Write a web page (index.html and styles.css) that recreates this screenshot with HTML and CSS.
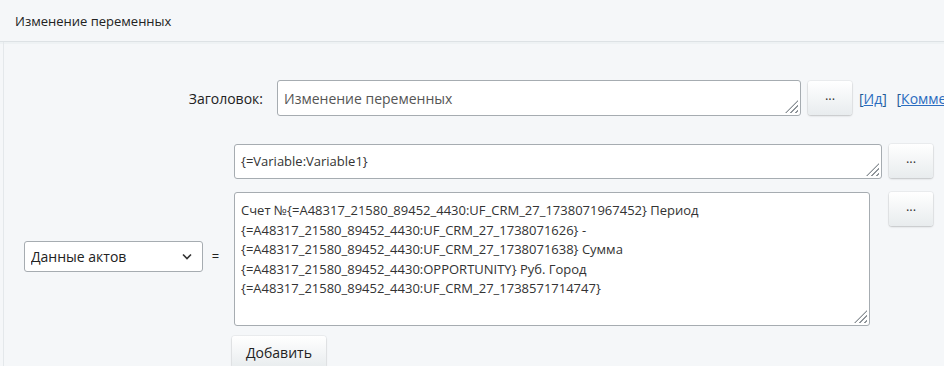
FILE: index.html
```html
<!DOCTYPE html>
<html>
<head>
  <meta charset="UTF-8">
  <title>Изменение переменных</title>
  <link rel="stylesheet" href="styles.css">
</head>
<body>
  <div class="dialog-head">Изменение переменных</div>
  <div class="dialog-body">
    <div class="title-row">
      <label class="title-label" for="title">Заголовок:</label>
      <div class="area-wrap">
        <textarea id="title" class="area area-title">Изменение переменных</textarea>
        <span class="grip"></span>
      </div>
      <button class="dots">...</button>
      <span class="links">
        <span class="bracket">[<a href="#">Ид</a>]</span>
        <span class="bracket">[<a href="#">Комментарий</a>]</span>
      </span>
    </div>

    <div class="var-row">
      <div class="select-wrap">
        <select class="var-select">
          <option>Данные актов</option>
        </select>
        <svg class="chevron" width="10" height="7" viewBox="0 0 10 7"><path d="M1 1.5l4 4 4-4" fill="none" stroke="#333" stroke-width="1.6"/></svg>
      </div>
      <span class="eq">=</span>
      <div class="values">
        <div class="value-line">
          <div class="area-wrap">
            <textarea class="area area-short">{=Variable:Variable1}</textarea>
            <span class="grip"></span>
          </div>
          <button class="dots">...</button>
        </div>
        <div class="value-line">
          <div class="area-wrap">
            <textarea class="area area-long">Счет №{=A48317_21580_89452_4430:UF_CRM_27_1738071967452} Период
{=A48317_21580_89452_4430:UF_CRM_27_1738071626} -
{=A48317_21580_89452_4430:UF_CRM_27_1738071638} Сумма
{=A48317_21580_89452_4430:OPPORTUNITY} Руб. Город
{=A48317_21580_89452_4430:UF_CRM_27_1738571714747}</textarea>
            <span class="grip"></span>
          </div>
          <button class="dots dots-far">...</button>
        </div>
        <button class="add-btn">Добавить</button>
      </div>
    </div>
  </div>
</body>
</html>
```

FILE: styles.css
```css
body {
  margin: 0;
  background-color: #f5f7f9;
  font-family: "Open Sans", "Noto Sans", sans-serif;
  font-size: 13px;
  color: #222;
  overflow: hidden;
}
.dialog-head {
  height: 41px;
  line-height: 42px;
  padding-left: 15px;
  border-bottom: 1px solid #dde2e5;
  box-shadow: 0 2px 0 #eef2f4;
}
.dialog-body {
  margin-left: 3px;
  border-left: 1px solid #e4e8eb;
  height: 340px;
}
.title-row {
  display: flex;
  align-items: center;
  padding-top: 38px;
}
.title-row > * {
  flex-shrink: 0;
}
.title-label {
  width: 259px;
  text-align: right;
  margin-right: 14px;
  font-size: 14px;
}
.area-wrap {
  position: relative;
  display: flex;
}
.area {
  font-family: inherit;
  font-size: 13px;
  color: #333;
  background: #fff;
  border: 1px solid #a6acb1;
  border-radius: 3px;
  padding: 6px 6px;
  resize: none;
  line-height: 19.5px;
  box-sizing: border-box;
  outline: none;
  overflow: hidden;
}
.area-title {
  width: 524px;
  height: 36px;
  padding-top: 8px;
  color: #555;
  font-size: 14px;
}
.area-short {
  width: 648px;
  height: 35px;
  padding-top: 7px;
}
.area-long {
  width: 636px;
  height: 134px;
  padding-top: 8px;
}
.grip {
  position: absolute;
  right: 3px;
  bottom: 3px;
  width: 13px;
  height: 13px;
  background: repeating-linear-gradient(135deg, transparent 0 2px, #8f959a 2px 3.5px);
  clip-path: polygon(100% 0, 100% 100%, 0 100%);
}
.dots {
  width: 44px;
  height: 34px;
  margin-left: 7px;
  border: none;
  border-radius: 3px;
  background: linear-gradient(#ffffff, #e8ecee);
  box-shadow: 0 1px 2px rgba(0, 0, 0, 0.18), 0 0 0 1px rgba(0, 0, 0, 0.04);
  font-family: inherit;
  font-size: 13px;
  color: #333;
  padding: 0 0 6px;
  cursor: pointer;
  flex-shrink: 0;
}
.links {
  margin-left: 7px;
  white-space: nowrap;
  font-size: 14px;
}
.bracket {
  color: #1f5a96;
  margin-right: 6px;
}
.links a {
  color: #2a6cc0;
}
.var-row {
  display: flex;
  align-items: center;
  margin-top: 28px;
}
.select-wrap {
  position: relative;
  margin-left: 20px;
}
.var-select {
  appearance: none;
  width: 179px;
  height: 31px;
  border: 1px solid #a6acb1;
  border-radius: 3px;
  background: #fff;
  font-family: inherit;
  font-size: 14px;
  color: #222;
  padding: 0 6px;
  outline: none;
}
.chevron {
  position: absolute;
  right: 11px;
  top: 12px;
  pointer-events: none;
}
.eq {
  width: 25px;
  margin-right: 6px;
  text-align: center;
}
.values {
  display: flex;
  flex-direction: column;
  align-items: flex-start;
}
.value-line {
  display: flex;
  align-items: flex-start;
  margin-bottom: 13px;
}
.value-line:nth-child(2) {
  margin-bottom: 10px;
}
.dots-far {
  margin-left: 19px;
}
.add-btn {
  height: 32px;
  padding: 0 14px;
  border: none;
  border-radius: 3px;
  background: linear-gradient(#ffffff, #e8ecee);
  box-shadow: 0 1px 2px rgba(0, 0, 0, 0.18), 0 0 0 1px rgba(0, 0, 0, 0.04);
  font-family: inherit;
  font-size: 14px;
  color: #222;
  margin-left: -2px;
}
```
